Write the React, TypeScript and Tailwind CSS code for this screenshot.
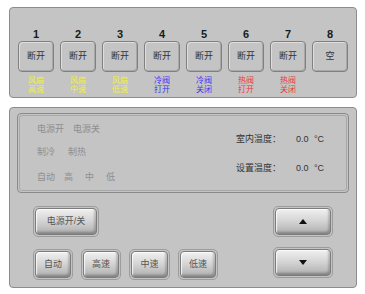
const relays = [
  { n: '1', text: '断开', label: ['风扇', '高速'], color: 'text-[#f0f040]' },
  { n: '2', text: '断开', label: ['风扇', '中速'], color: 'text-[#f0f040]' },
  { n: '3', text: '断开', label: ['风扇', '低速'], color: 'text-[#f0f040]' },
  { n: '4', text: '断开', label: ['冷阀', '打开'], color: 'text-[#3838ee]' },
  { n: '5', text: '断开', label: ['冷阀', '关闭'], color: 'text-[#3838ee]' },
  { n: '6', text: '断开', label: ['热阀', '打开'], color: 'text-[#ee3838]' },
  { n: '7', text: '断开', label: ['热阀', '关闭'], color: 'text-[#ee3838]' },
  { n: '8', text: '空', label: [], color: '' },
]

const font = { fontFamily: '"Liberation Sans", "Noto Sans CJK SC", sans-serif' }

function BevelButton({ children, className }: { children: React.ReactNode; className: string }) {
  return (
    <div className={`rounded-[5px] border border-[#9c9c9c] p-[1px] ${className}`}>
      <div className="flex h-full w-full items-center justify-center rounded-[4px] border border-[#7c7c7c] bg-[linear-gradient(to_bottom,#f0f0f0_0%,#d6d6d6_45%,#bdbdbd_80%,#9e9e9e_100%)] text-[9px] text-[#555] shadow-[inset_-2px_-2px_2px_rgba(0,0,0,0.18),inset_1px_1px_1px_rgba(255,255,255,0.8)]">
        {children}
      </div>
    </div>
  )
}

export default function App() {
  return (
    <div className="flex h-[294px] w-[365px] flex-col gap-[9px] bg-white pl-[9px] pt-[7px]" style={font}>
      {/* relay status panel */}
      <div className="flex h-[91px] w-[348px] gap-[6px] rounded-[4px] border border-[#8c8c8c] bg-[#c4c4c4] px-[8px] pt-[20px]">
        {relays.map((r) => (
          <div key={r.n} className="flex w-[36px] flex-col items-center">
            <span className="h-[13px] text-[11px] font-bold leading-[13px] text-[#1a1a1a]">{r.n}</span>
            <div className="flex h-[31px] w-[36px] items-center justify-center rounded-[4px] border border-[#808080] text-[9px] text-[#333] shadow-[inset_1px_1px_0_#dedede,inset_-1px_-1px_0_#a8a8a8]">
              {r.text}
            </div>
            <div className={`mt-[4px] flex flex-col items-center text-[8px] leading-[9px] ${r.color}`}>
              {r.label.map((l) => (
                <span key={l}>{l}</span>
              ))}
            </div>
          </div>
        ))}
      </div>

      {/* control panel */}
      <div className="flex h-[181px] w-[348px] flex-col rounded-[4px] border border-[#8c8c8c] bg-[#c4c4c4] px-[7px] pt-[5px]">
        <div className="flex h-[80px] w-[332px] rounded-[4px] border border-[#8a8a8a] p-[1px]">
          <div className="flex flex-1 rounded-[3px] border border-[#a8a8a8] text-[9px]">
            <div className="flex flex-1 flex-col gap-[9px] pl-[17px] pt-[7px] text-[#8e8e8e]">
              <div className="flex gap-[9px]">
                <span>电源开</span>
                <span>电源关</span>
              </div>
              <div className="flex gap-[13px]">
                <span>制冷</span>
                <span>制热</span>
              </div>
              <div className="mt-[3px] flex gap-[12px]">
                <span className="mr-[-3px]">自动</span>
                <span>高</span>
                <span>中</span>
                <span>低</span>
              </div>
            </div>
            <div className="flex flex-col gap-[15px] pr-[22px] pt-[17px] text-[#333]">
              <div className="flex">
                <span className="w-[60px]">室内温度：</span>
                <span className="w-[18px]">0.0</span>
                <span>°C</span>
              </div>
              <div className="flex">
                <span className="w-[60px]">设置温度：</span>
                <span className="w-[18px]">0.0</span>
                <span>°C</span>
              </div>
            </div>
          </div>
        </div>

        <div className="mt-[13px] flex justify-between pl-[16px] pr-[16px]">
          <div className="flex flex-col gap-[12px]">
            <BevelButton className="h-[31px] w-[66px]">电源开/关</BevelButton>
            <div className="flex gap-[8px]">
              <BevelButton className="h-[31px] w-[40px]">自动</BevelButton>
              <BevelButton className="h-[31px] w-[40px]">高速</BevelButton>
              <BevelButton className="h-[31px] w-[41px]">中速</BevelButton>
              <BevelButton className="h-[31px] w-[40px]">低速</BevelButton>
            </div>
          </div>
          <div className="flex flex-col gap-[10px]">
            <BevelButton className="h-[31px] w-[60px]">
              <svg width="8" height="5" viewBox="0 0 8 5"><path d="M4 0 L8 5 L0 5 Z" fill="#111" /></svg>
            </BevelButton>
            <BevelButton className="h-[31px] w-[60px]">
              <svg width="8" height="5" viewBox="0 0 8 5"><path d="M0 0 L8 0 L4 5 Z" fill="#111" /></svg>
            </BevelButton>
          </div>
        </div>
      </div>
    </div>
  )
}
